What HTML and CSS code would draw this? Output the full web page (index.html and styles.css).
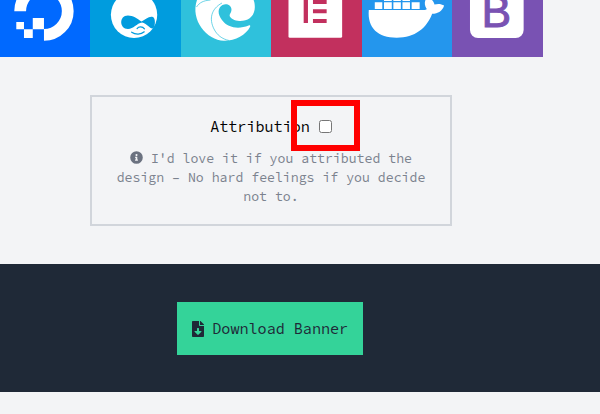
FILE: index.html
```html
<!DOCTYPE html>
<html lang="en">
<head>
<meta charset="utf-8">
<title>Banner</title>
<link rel="stylesheet" href="styles.css">
</head>
<body>
<main class="page">
  <section class="preview">
    <svg class="tile digitalocean" viewBox="0 0 90.5 56.5">
      <path d="M20.2 11.3A23.8 23.8 0 1 1 44 34.9" fill="none" stroke="#fff" stroke-width="11.8"/>
      <path fill="#fff" d="M32.8 18H44v11.3H32.8zM24 29.3h8.8V38H24zM16.3 22H24v7.3h-7.7z"/>
    </svg>
    <svg class="tile drupal" viewBox="90.5 0 90.5 56.5">
      <circle cx="134.6" cy="14.8" r="23.2" fill="#fff"/>
      <path fill="#009cde" d="M128.500 15.500c5 0 9 3 13.600 6 4-2.500 8-6 11.400-4.500 2.800 1.500 2.300 9 .5 11.200-2.700 2-6.500-4.700-11.300-5.700-5.500.8-8.700 6.500-14.200 6.500-8.700 0-9.200-13.500 0-13.500z"/>
      <path d="M137.600 28.600c1.500-2.200 5.500-2.400 7.400.2M132.200 32.200c3.800 2.700 9.300 2.600 12.600-.4" fill="none" stroke="#009cde" stroke-width="1.200" stroke-linecap="round"/>
    </svg>
    <svg class="tile edge" viewBox="181 0 90.5 56.5">
      <path fill="#fff" d="M197 0C190 20 207 40.700 224 40.700c12 0 22-6 26.200-14 .4-1.200-.5-1.700-1.500-1.200-10 4-21 2.500-26.700-5.500-4.500-6-4.500-12 .5-15 4-2 8.500 0 9 4 .3 4-2.500 5-1.600 7.400 2 3.600 8 4.800 13 4.400 7-.6 12-6 12-13.800 0-3-.5-5-1.200-7z"/>
      <path d="M196.500 7c3-4.500 7-6.500 14-7M222 3c-11 6-13 16-8 26 3 6 8 10 15 11.500" fill="none" stroke="#2fc1dc" stroke-width=".7"/>
    </svg>
    <svg class="tile elementor" viewBox="271.3 0 90.5 56.5">
      <rect x="288.800" y="-16" width="53.700" height="53.700" rx="1.500" fill="#fff"/>
      <path fill="#c2305e" d="M304-1h4.300v24H304zM313.300 0H327v4h-13.700zM313.300 9.300H327v4h-13.700zM313.300 19H327v4h-13.700z"/>
    </svg>
    <svg class="tile docker" viewBox="361.5 0 90.5 56.5">
      <path fill="#fff" d="M368.300 10h55c1.500 0 2.500-.4 3-1-2-2.700-2.500-6-1.300-9h6.500c1.500 1.500 2.200 3 2.500 4.500 3.500-1 7-.7 9.700 1-1.700 5.500-6 8.300-12 8.300-5.500 14.500-17 23.900-35.500 23.900-18.500 0-29.500-9.500-27.900-27.700z"/>
      <path fill="#fff" d="M374.300 2.200h7.500V9h-7.500zM383.500 2.200h7.800V9h-7.800zM392.900 2.200h7.500V9h-7.500zM402 2.200h7.500V9H402zM411.200 2.200h8V9h-8zM383.500-1h7.800v2h-7.800zM392.900-1h7.500v2h-7.500zM402-1h7.500v2H402z"/>
    </svg>
    <svg class="tile bootstrap" viewBox="452 0 90.5 56.5">
      <rect x="470" y="-16" width="53.700" height="54" rx="8" fill="#fff"/>
      <text class="letter" x="481.600" y="26.700">B</text>
    </svg>
  </section>

  <section class="card">
    <label class="attribution">Attribution
      <span class="check"><input type="checkbox"><span class="marker"></span></span>
    </label>
    <p class="note"><svg class="info" viewBox="0 0 512 512"><path fill="currentColor" fill-rule="evenodd" d="M256 8a248 248 0 1 0 0 496 248 248 0 1 0 0-496zm0 110a42 42 0 1 1 0 84 42 42 0 1 1 0-84zm56 254c0 7-5 12-12 12h-88c-7 0-12-5-12-12v-24c0-7 5-12 12-12h12v-64h-12c-7 0-12-5-12-12v-24c0-7 5-12 12-12h64c7 0 12 5 12 12v100h12c7 0 12 5 12 12z"/></svg> I'd love it if you attributed the<br>design – No hard feelings if you decide<br>not to.</p>
  </section>

  <section class="actions">
    <button class="download"><svg class="file" viewBox="0 0 384 512"><path fill="currentColor" fill-rule="evenodd" d="M224 136V0H24C11 0 0 11 0 24v464c0 13 11 24 24 24h336c13 0 24-11 24-24V160H248c-13 0-24-11-24-24zm76 209L204 440c-6 7-17 7-24 0L84 345c-10-10-3-27 11-27h65v-80c0-9 7-16 16-16h32c9 0 16 7 16 16v80h65c14 0 21 17 11 27zM377 105L279 7c-5-5-11-7-17-7h-6v128h128v-6c0-6-3-13-7-17z"/></svg><span>Download Banner</span></button>
  </section>
</main>
</body>
</html>
```
FILE: styles.css
```css
body {
  margin: 0;
  background: #f3f4f6;
  font-family: "Source Code Pro", "Noto Sans Mono CJK SC", "Noto Sans Mono CJK JP", "DejaVu Sans Mono", monospace;
  color: #000;
}
.page { height: 414px; overflow: hidden; }
.preview { display: flex; width: 542.5px; height: 56.5px; }
.tile { display: block; flex: 1; min-width: 0; height: 56.5px; }
.digitalocean { background: #0069ff; }
.drupal { background: #009cde; }
.edge { background: #2fc1dc; }
.elementor { background: #c2305e; }
.docker { background: #2496ed; }
.bootstrap { background: #7952b3; }
.letter {
  font: 44.5px "Liberation Sans", sans-serif;
  fill: #7952b3;
  stroke: #7952b3;
  stroke-width: 1px;
}
.card {
  box-sizing: border-box;
  width: 362px;
  height: 131.5px;
  margin: 38px 0 0 90px;
  padding-top: 18px;
  border: 2px solid #d1d5db;
  text-align: center;
}
.attribution {
  display: flex;
  justify-content: center;
  align-items: center;
  gap: 9px;
  height: 24px;
  font-size: 15.1px;
  line-height: 24px;
}
.check { position: relative; display: flex; }
.check input { width: 13px; height: 13px; margin: 0; }
.marker {
  position: absolute;
  left: -28px;
  top: -20px;
  width: 57px;
  height: 39px;
  border: 6px solid #f00;
}
.note {
  margin: 10px 0 0;
  font-size: 13.2px;
  line-height: 19px;
  color: #7b828e;
  white-space: nowrap;
}
.info { width: 13px; height: 13px; vertical-align: -1px; color: #6b7280; }
.actions {
  display: flex;
  box-sizing: border-box;
  height: 128px;
  margin-top: 38px;
  padding: 38px 0 0 177.3px;
  background: #1f2937;
}
.download {
  display: flex;
  align-items: center;
  gap: 8px;
  width: 186px;
  height: 53px;
  padding: 0 0 0 15px;
  border: 0;
  background: #34d399;
  color: #1f2937;
  font: 15.1px "Source Code Pro", "Noto Sans Mono CJK SC", "Noto Sans Mono CJK JP", "DejaVu Sans Mono", monospace;
  white-space: nowrap;
}
.file { flex: none; width: 12px; height: 16px; }
```
